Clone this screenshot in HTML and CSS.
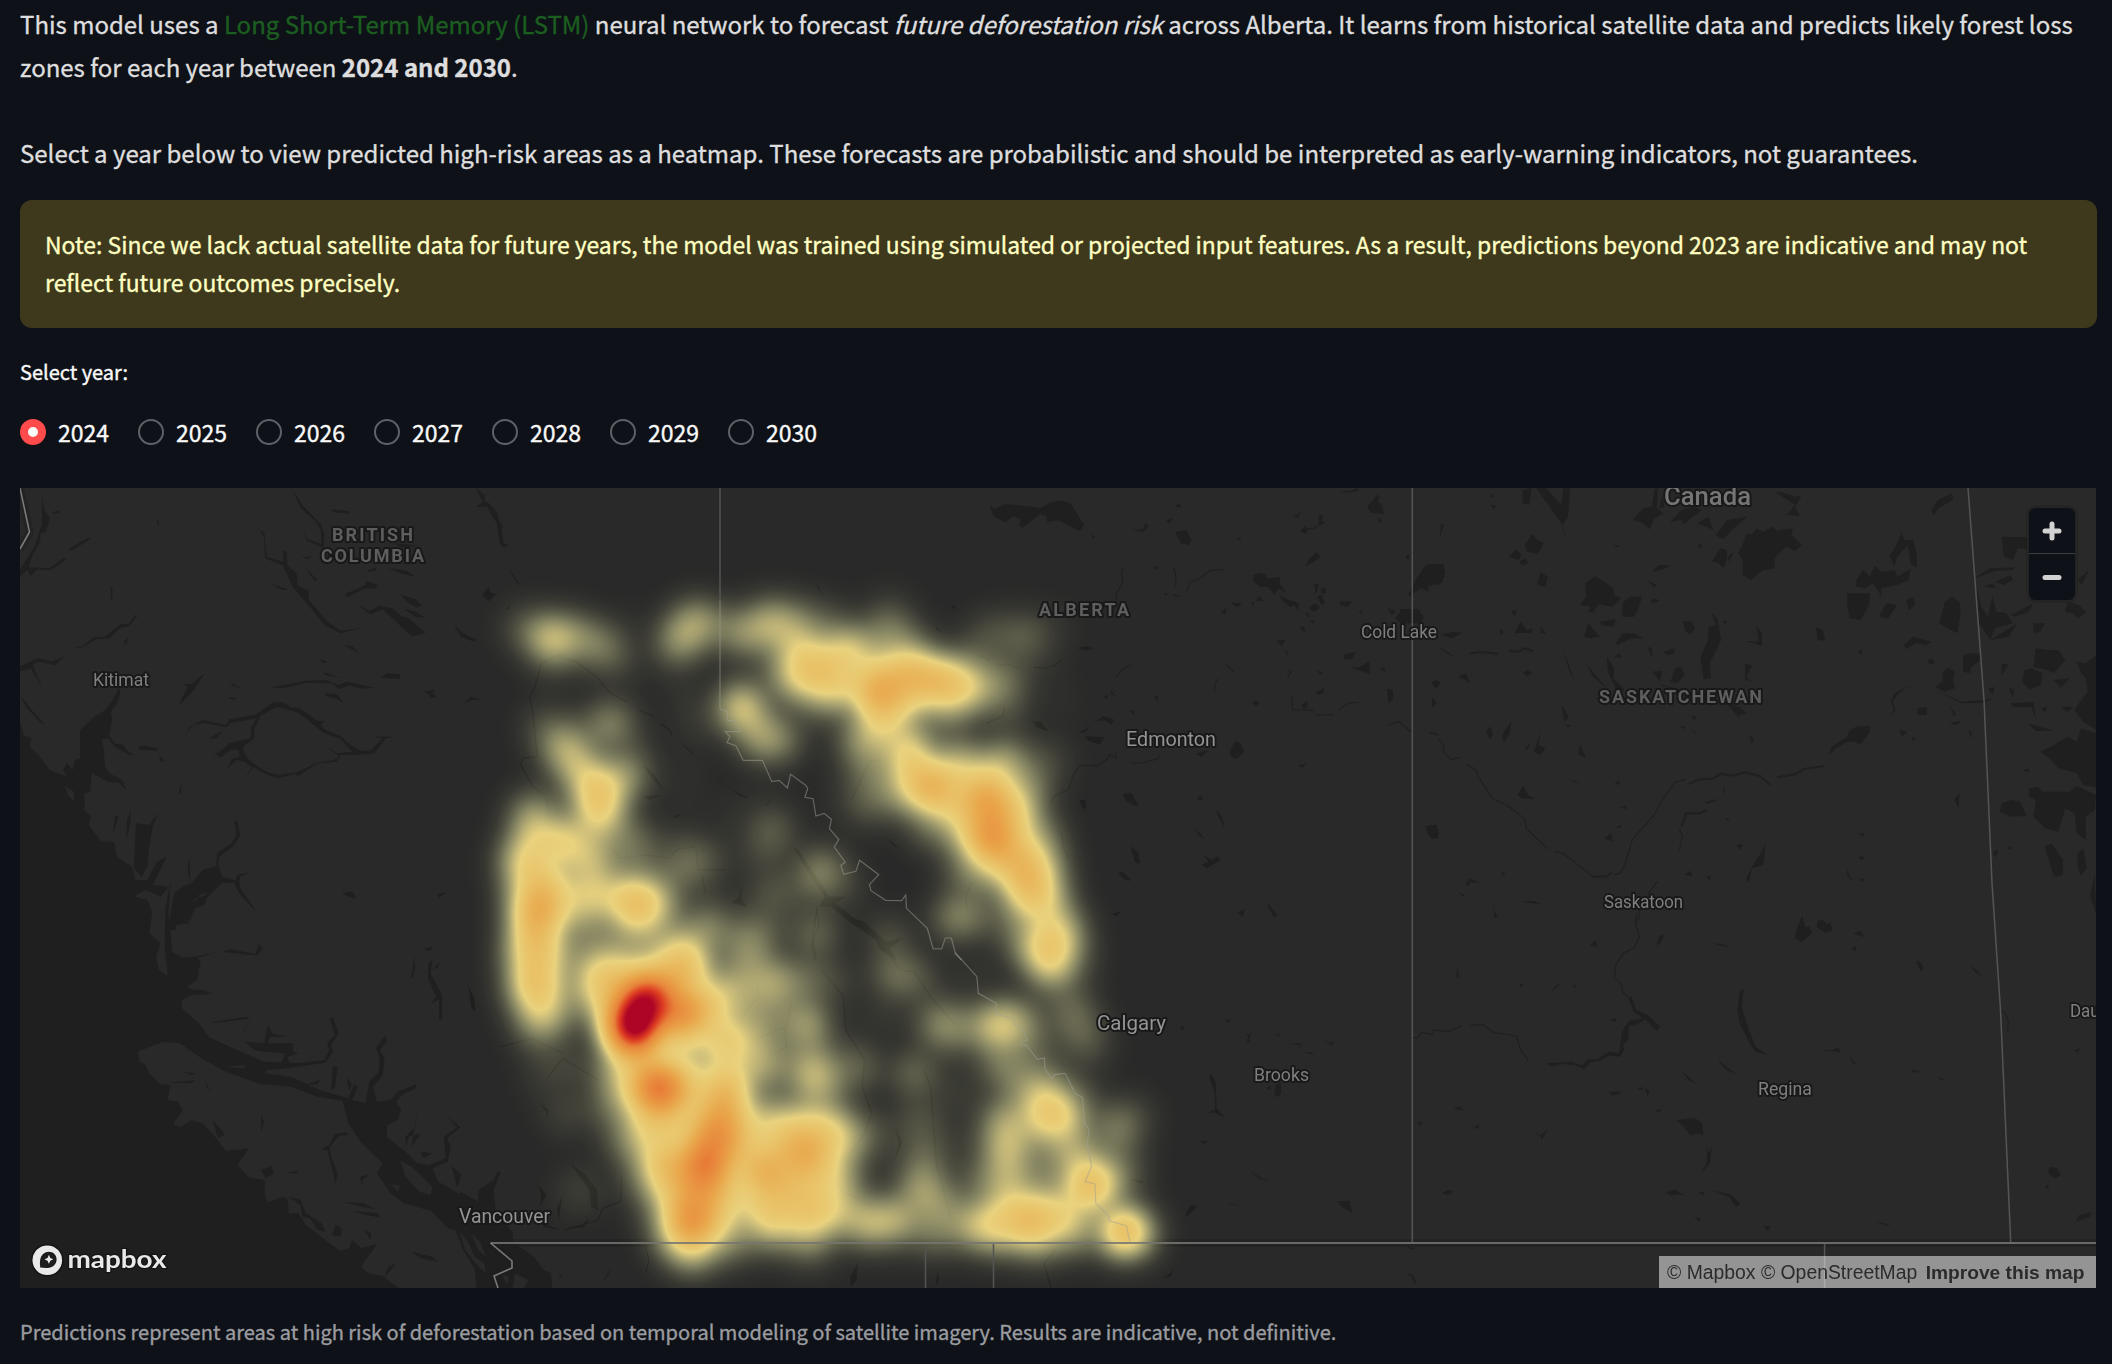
FILE: index.html
```html
<!DOCTYPE html>
<html lang="en">
<head>
<meta charset="utf-8">
<title>Deforestation risk forecast</title>
<link rel="stylesheet" href="styles.css">
</head>
<body>
<main class="page">
  <p class="intro">This model uses a <span class="term">Long Short-Term Memory (LSTM)</span> neural network to forecast <em>future deforestation risk</em> across Alberta. It learns from historical satellite data and predicts likely forest loss<br>zones for each year between <strong>2024 and 2030</strong>.</p>
  <p class="intro intro-second">Select a year below to view predicted high-risk areas as a heatmap. These forecasts are probabilistic and should be interpreted as early-warning indicators, not guarantees.</p>
  <div class="note">Note: Since we lack actual satellite data for future years, the model was trained using simulated or projected input features. As a result, predictions beyond 2023 are indicative and may not<br>reflect future outcomes precisely.</div>
  <div class="label">Select year:</div>
  <div class="years">
    <label class="year"><span class="dot dot-on"></span>2024</label>
    <label class="year"><span class="dot"></span>2025</label>
    <label class="year"><span class="dot"></span>2026</label>
    <label class="year"><span class="dot"></span>2027</label>
    <label class="year"><span class="dot"></span>2028</label>
    <label class="year"><span class="dot"></span>2029</label>
    <label class="year"><span class="dot"></span>2030</label>
  </div>
  <div class="map">
    <svg class="layer" viewBox="20 488 2076 800">
      <!-- north-west: fjords and interior lakes -->
      <g class="water" transform="translate(0 480) scale(.3827 .3333)">
        <path d="M52 725L62 765 82 775 78 800 100 825 130 870 160 895 180 950 215 985 238 1010 232 1035 265 1085 298 1085 305 1130 345 1160 355 1205 385 1225 345 1255 370 1270 375 1300 395 1320 390 1360 40 1360 40 725z"/>
        <path d="M110 45L116 90 130 115 120 155 105 160 105 185 85 225 75 262 130 265 165 235 174 238 132 271 98 268 80 288 72 270 52 290 52 270 90 200 110 130zM135 97L150 93 160 97 145 101zM178 208L232 172 234 178 188 212zM408 118L415 125 414 140zM285 320L294 325 293 360 290 360 290 328zM196 502L215 500 245 472 275 470 315 432 335 433 355 403 358 410 335 440 315 443 285 475 250 478 212 505zM338 470L328 494 324 485zM52 560L100 534 135 545 168 528 145 556 132 552 100 545 85 555 110 620 80 565 52 574zM52 645L90 700 118 734 105 727 70 685z"/>
        <path d="M310 622L315 640 305 672 290 695 293 720 285 765 300 790 322 795 335 815 348 822 340 826 300 800 282 775 265 778 270 800 275 860 285 880 320 900 330 930 310 908 280 905 240 878 235 935 220 940 222 985 195 985 193 935 150 905 130 870 175 890 165 870 175 848 190 870 195 840 210 835 209 750 245 712 275 690 298 655z"/>
        <path d="M762 24L790 75 838 132 848 165 845 205 800 180 794 150 802 177 840 192 838 150 825 125 785 82zM680 150L691 160 697 230 740 245 740 210 750 215 750 255 775 280 778 315 808 335 806 358 855 425 890 452 943 445 890 460 850 437 765 320 740 257 693 235 690 175zM796 260L830 300 822 303zM705 312L755 328 740 331zM862 88L910 93 916 101 875 97zM902 342L955 315 957 303 988 315 980 326 955 325 906 352zM930 370L965 393 992 377 1028 386 1050 410 1065 412 1112 460 1075 469 1035 425 1000 388 968 403zM1045 343L1085 358 1102 376 1090 383 1065 367zM1054 386L1085 395 1113 413 1085 410zM1015 264L1065 273 1085 290 1050 281zM958 272L985 262 982 272 965 276zM1030 190L1098 197 1050 202zM785 225L800 232 817 226 803 238zM898 495L920 498 938 520z"/>
        <path d="M1243 24L1265 45 1268 65 1278 70 1300 98 1303 120 1314 140 1310 150 1316 190 1329 195 1318 203 1306 190 1298 130 1272 80 1243 80 1262 66zM1330 265L1362 320 1345 300zM1275 322L1283 338 1296 342 1278 364 1260 345zM1186 435L1210 460 1235 475 1246 478 1238 485 1205 470zM1332 372L1328 390 1322 388z"/>
        <path d="M535 580L500 640 466 677 490 620 478 612 500 612zM600 606L630 625 610 618zM595 651L620 653 607 660zM705 623L800 602 850 600 885 615 905 605 980 623 940 626 912 615 888 628 865 610 800 608 740 625zM845 576L892 595 850 585zM996 593L1012 580 1045 583 1046 597zM835 537L856 545 845 551zM848 640L880 643 898 670 878 655 855 650zM1108 636L1137 628 1130 640 1140 650 1125 655 1120 643zM1213 672L1230 650 1257 658 1230 660zM1243 740L1258 765z"/>
        <path d="M488 758L495 740 530 720 590 735 600 718 670 703 715 667 740 667 762 683 782 683 830 724 848 722 838 735 850 750 890 768 915 795 945 812 968 812 1000 775 975 770 1030 770 1008 775 978 820 930 825 890 825 880 845 830 850 780 888 770 882 725 895 695 883 660 860 630 910 660 865 640 845 618 840 595 865 605 838 625 830 625 810 605 808 575 833 570 825 557 824 570 818 600 790 655 775 657 740 670 715 605 728 590 742 530 728 505 735zM545 775L583 752 565 775zM680 708L665 745 664 775 635 800 640 825 660 850 700 877 725 885 775 877 825 850 880 838 886 827 850 798 882 820 920 815 890 777 845 758 780 698 725 680z" fill-rule="evenodd"/>
        <path d="M362 800L380 797 410 805 412 812 365 810zM415 825L430 842 420 845zM475 908L472 940 465 945zM415 997L400 1035 390 1100 385 1160 370 1190 350 1165 355 1030 390 1035zM310 1005L295 1065 300 1010zM340 992L342 1020 330 1080 332 1020zM612 1020L620 1025 628 1065 612 1095 573 1130 570 1155 580 1190 615 1200 620 1185 655 1175 628 1190 625 1205 632 1240 671 1298 625 1240 612 1205 580 1203 560 1230 520 1245 500 1270 490 1320 460 1335 460 1350 438 1350 455 1240 480 1218 500 1210 530 1170 565 1158 568 1120 605 1090 618 1065zM435 1130L410 1145 385 1200 360 1210 380 1230 420 1250 440 1220 400 1215zM495 1130L497 1205 490 1170zM505 1245L535 1255 530 1275 505 1285 525 1265zM893 1240L920 1235 932 1256 915 1252zM1142 1245L1165 1237 1148 1252zM932 1184L954 1203z"/>
      </g>
      <!-- south-west: coast, straits and Vancouver Island -->
      <g transform="translate(0 880) scale(.3827 .3333)">
        <path class="water" d="M45 0L380 0 350 20 350 50 385 60 398 95 390 160 420 190 408 230 415 270 450 298 475 315 520 335 475 360 475 385 520 430 545 470 600 500 640 520 690 545 780 550 848 540 860 510 855 490 875 465 862 415 870 412 885 460 865 495 870 515 850 548 740 566 700 570 690 580 760 590 835 630 910 655 925 615 935 620 920 660 955 670 965 605 990 575 992 530 982 505 1005 467 1012 482 993 510 1005 535 1000 585 975 620 985 665 1020 660 1040 635 1088 612 1086 625 1050 645 1035 665 1048 690 1040 720 1012 735 1010 770 1060 815 1090 850 1120 855 1165 835 1160 770 1195 742 1165 706 1203 742 1168 775 1178 800 1170 845 1130 865 1145 905 1200 942 1205 935 1250 965 1250 930 1290 900 1300 875 1308 877 1290 930 1295 990 1340 1060 1340 1085 1395 1130 1420 1170 1440 1180 1443 1225 45 1225z"/>
        <path class="land" d="M360 515L425 485 470 490 520 530 590 575 680 612 760 620 830 650 895 662 910 730 945 790 1000 850 985 880 1020 940 1055 970 1125 992 1170 1045 1190 1050 1210 1110 1240 1165 1245 1225 1042 1225 1000 1188 960 1180 943 1160 985 1092 945 1105 920 1080 912 1105 888 1112 850 1080 800 1035 780 1000 755 1000 752 960 740 950 700 967 692 945 692 900 650 892 620 855 650 805 590 813 565 775 530 730 500 720 470 742 453 732 478 690 465 665 438 660 445 615 420 613 390 580 380 555 365 545zM1045 840L1075 860 1130 920 1125 945 1095 935 1060 890zM1020 912L1045 918 1040 935zM585 560L640 555 640 565zM1140 870L1160 872 1185 930 1150 900z"/>
        <path class="water" d="M475 575L512 580 500 586zM535 600L550 632 540 620zM440 608L510 600 500 610zM610 602L630 668 622 645zM682 707L690 725 682 755zM905 757L910 765 885 768 862 800 865 830 882 880 877 912 865 850 855 810 840 808 860 795 875 762zM940 890L965 884 948 900 945 915zM895 965L950 970 980 988 945 980zM920 993L990 1000 990 1012 955 1005zM1075 1115L1130 1130 1145 1145 1100 1135zM1037 1148L1005 1190 1015 1160zM950 1047L970 1060 968 1080zM752 878L778 872 775 882zM682 870L710 858 715 880 695 895zM730 948L738 975M752 948L785 975 790 1010 810 1015 830 1050 850 1055 840 1030 800 1000 785 960zM876 1035L893 1045 890 1070 868 1065zM620 825L650 805 640 820 620 830zM555 720L572 740 588 765 570 775z"/>
        <path class="water" d="M446 0L440 100 450 215 485 240 485 285 520 280 515 300 475 330 530 330 555 342 500 345 455 300 455 235 512 230 570 215 515 235 525 245 515 285 485 310 440 300 430 200 432 90zM456 110L490 125 500 70 530 50 570 5 600 0 625 20 672 97 628 42 610 8 580 8 540 55 535 75 510 85 492 130 456 135zM580 215L600 208 668 222 676 192 686 205 672 227 600 218zM552 427L640 410 655 415 560 430zM630 462L650 430 640 450zM640 485L690 490 700 435 712 462 760 470 705 470 700 490 765 490 765 515 780 520 750 530 760 555 735 550 745 520 690 515 665 510zM870 560L882 560 875 625 865 630zM800 615L838 598 830 612zM905 592L920 615 912 630zM1083 228L1085 260 1078 297 1075 290zM1130 238L1125 280 1155 345 1155 420 1147 418 1148 355 1125 375 1140 350 1118 295 1120 250zM1150 245L1145 262 1130 270zM1108 207L1132 198 1122 214zM1224 318L1238 350 1242 392 1232 385zM895 40L920 35 932 56zM1142 45L1165 37 1148 52zM1090 690L1085 740 1060 770 1060 805 1068 770 1100 760 1075 800zM1100 815L1130 820 1105 835zM1180 858L1205 885 1195 922zM1328 788L1342 798zM1410 670L1433 690 1430 722 1428 695zM1408 918L1428 945 1410 978 1415 950zM1470 944L1460 1020 1455 985zM1492 852L1530 885 1560 930 1562 990 1545 980 1540 930zM1415 1030L1465 1050 1420 1040zM1480 1045L1520 1035 1540 1015 1525 1043zM1462 1178L1470 1195 1462 1190z"/>
        <path class="land" d="M1200 1050L1225 1090 1240 1130 1265 1150 1270 1180 1250 1160 1215 1110zM1230 1060L1255 1085 1270 1130 1250 1110zM1310 1180L1330 1190 1325 1215zM1345 1180L1380 1200 1370 1225 1340 1225z"/>
      </g>
      <!-- northern and central Alberta -->
      <g class="water" transform="translate(960 488) scale(.33333)">
        <path d="M90 55L105 62 135 48 175 52 240 60 275 42 305 38 330 45 350 75 372 110 360 130 330 115 295 97 262 102 258 85 240 78 187 120 177 112 182 95 160 85 135 103 100 85zM395 138L405 146 398 152zM513 124L548 125 555 108 567 112 550 132zM618 98L638 90 630 108zM642 56L656 47 665 58zM645 133L678 125 695 155 688 171 663 166zM832 155L840 147 843 157zM577 234L597 238 588 245zM612 315L624 317 618 325zM637 317L662 326 645 325zM880 262L895 255 918 260 922 272 962 267 958 285 980 314 955 302 943 320 925 297 900 296 880 280zM887 338L898 324 912 340zM958 322L985 335 1015 345 1015 370 1003 350 990 357 970 340zM1062 288L1077 290 1068 318zM1082 305L1095 298 1098 315 1085 318zM1072 325L1085 320 1095 345 1083 348zM1047 360L1065 345 1080 360 1062 372zM1035 377L1048 375 1045 388zM1050 398L1062 397 1060 408zM1015 418L1030 415 1038 435zM1035 235L1050 210 1070 192 1082 208 1060 222 1050 228zM1222 55L1240 35 1250 20 1260 28 1252 40 1268 55 1272 78 1232 74zM1140 10L1175 8 1190 0 1197 8 1160 14zM1000 88L1022 72 1015 88zM1020 130L1035 115 1045 125 1035 138zM1075 85L1090 80 1085 98 1097 105 1078 112zM1255 88L1266 97 1258 107zM1338 205L1347 198 1346 215zM1138 340L1177 340 1165 356 1142 352zM1282 360L1308 370 1295 382zM1195 372L1208 367 1205 377zM1305 390L1330 363 1375 363 1392 390 1380 405 1320 405zM1345 320L1365 280 1395 233 1440 228 1440 290 1400 285 1408 310 1380 300 1350 325zM810 342L845 348 832 358zM782 370L800 362 795 380zM873 343L883 343 878 355zM950 457L975 456 965 476zM977 483L985 498 980 502zM1150 500L1188 492 1178 512 1155 515zM1172 540L1198 538 1228 520 1230 558 1198 547zM1257 546L1272 538 1278 550zM1280 603L1298 605 1300 630 1287 648zM1070 548L1087 553 1083 560zM1067 615L1092 600 1092 612 1078 622zM1025 650L1042 640 1042 660 1028 662zM877 645L888 635 898 645 888 654zM808 795L825 760 840 765 852 790 830 813 815 808zM708 797L745 785 725 808zM1015 831L1040 828 1025 840zM352 480L380 475 402 482 375 487zM218 700L240 700 267 731 228 718zM355 735L395 714 370 735zM405 700L430 685 463 695 453 710 435 697zM375 745L435 748 418 770 385 757zM430 625L447 620 440 633zM450 605L468 624 455 620zM510 665L525 670 520 680zM583 627L594 622 592 640zM358 938L375 935 378 960 368 963zM487 918L515 915 537 955 520 952 498 938zM712 930L722 922 730 935 718 939zM707 1022L735 1053 715 1042zM512 1075L535 1095 540 1125 525 1122zM475 1148L510 1180 490 1172zM728 1100L755 1115 775 1105 780 1117 740 1140 727 1130 745 1120zM766 965L785 985 795 1020 780 995zM1398 1015L1430 1010 1435 1050 1415 1053zM1418 588L1440 580 1430 600zM1417 630L1430 645 1418 657z"/>
        <path class="stream" d="M490 238L485 255 488 285 470 315 468 335M642 238L648 270 645 295M680 308L690 283 720 270 750 248 790 244M58 502L90 515M112 532L140 528 178 540M220 538L255 540 282 534 303 515M467 570L485 545 515 530M512 825L545 825 595 812 600 800M470 795L468 810 450 800 440 815 415 833 360 832 340 860 325 905 280 927 275 945M290 1025L305 1040 310 1080 327 1113M797 528L824 553M763 612L765 585 776 572M995 625L998 665 1062 667M1068 681L1122 680M1135 667L1165 645 1195 643M1285 712L1315 700 1355 733M1410 735L1433 740M985 545L993 552 982 568M1035 122L1060 122 1075 112"/>
      </g>
      <!-- southern Alberta -->
      <g class="water" transform="translate(1050 860) scale(.33333)">
        <path d="M205 35L218 35 242 58 235 63 212 48zM250 0L270 2 263 12zM457 15L480 5 510 0 470 25zM185 163L213 153 200 168zM562 157L585 147 578 170zM650 125L683 168 672 170 658 148zM525 478L541 480 532 489zM390 508L397 495 405 508zM588 518L598 525 606 517 598 535 600 548 590 548 595 532zM678 525L690 516 685 525 700 533zM712 556L748 548 755 562 742 553zM763 577L780 576 795 585zM822 540L842 550 850 543 848 557 838 553zM478 650L485 643 497 670 500 745 525 773 495 758 472 758 495 750 495 700zM650 685L661 676 662 690zM677 675L692 668 694 700 685 711 673 705zM450 844L473 843 465 852zM597 930L635 955 660 962 630 958zM530 1026L570 1038 545 1033zM405 1065L425 1032 432 1040 443 1033 435 1048 410 1068zM860 1023L898 1023 907 1058 880 1043zM235 957L282 963 275 970zM1103 790L1118 783 1110 797zM1128 800L1155 805zM1065 1160L1095 1165 1090 1169zM1068 1237L1090 1245 1100 1273 1092 1270 1085 1250zM338 1255L360 1240 372 1227 360 1250zM1175 1000L1200 990 1200 1004z"/>
      </g>
      <!-- mountain lakes and rivers beneath the risk surface -->
      <g transform="translate(480 560) scale(.40816 .33333)">
        <path class="water" d="M400 614L425 640 450 690 415 645zM400 710L446 705 415 719zM582 655L620 690 660 715 640 710zM463 776L495 760 485 770zM715 718L700 740 708 722zM640 980L640 1015 655 1040 615 1028 635 1010zM765 855L785 880 830 960 855 1010 898 1010 870 1028 915 1075 940 1085 995 1145 1035 1135 1005 1165 1020 1200 980 1170 970 1140 905 1085 860 1040 830 1040 845 1010 815 960zM998 835L1027 865 1010 855zM820 65L843 107 830 90zM1155 135L1165 140 1162 150zM1115 198L1130 215 1120 212z"/>
        <path class="stream" d="M190 290L235 305 285 350 320 400 360 425M390 450L425 470M440 490L465 510 470 530M498 555L525 585M205 280L150 310 135 380 122 410 130 470 140 590 105 595 100 615 130 680 160 705 172 780M325 865L340 895 405 885 465 895 480 870 525 860M530 870L535 930 600 930M545 950L552 1000M1285 440L1280 470 1240 490M980 600L955 605 935 655 910 720M1205 965L1190 1010 1195 1050M825 1040L830 1100 812 1150 820 1200"/>
      </g>
      <g transform="translate(480 880) scale(.4719 .33333)">
        <path class="water" d="M965 1220L970 1170 973 1200zM785 1220L785 1190 800 1150 798 1200zM880 742L895 790 878 840 888 790z"/>
        <path class="stream" d="M725 270L770 350 775 450 815 540 810 620 830 700 815 760 780 830 780 940 830 980M940 570L955 620 960 720 968 860 1000 1020M850 190L890 270 920 275 955 350 1005 430M715 80L705 170 712 240M145 590L175 535 250 600M45 500L110 475 175 520M300 890L298 965 260 985 250 1020 180 1050M350 1095L358 1140 352 1175M1220 1110L1195 1150 1210 1222M262 1200L275 1172M540 440L590 350 588 305M580 480L650 440 660 365M645 440L650 500 610 530"/>
      </g>
      <!-- Saskatchewan and Manitoba lakes -->
      <g class="water" transform="translate(1400 480) scale(.4541 .3333)">
        <path d="M300 24L322 24 355 75 360 24 375 26 370 110 358 135 367 188 355 130zM270 30L290 24 285 75 270 70zM200 40L207 50 200 55zM200 75L213 76 205 88zM90 130L97 135 88 170zM290 162L303 180 317 190 303 222 280 215 275 195zM255 208L268 225 262 240 240 232zM262 245L275 235 282 248 270 258zM310 277L325 290 320 322 302 312zM62 253L95 252 100 275 93 308 60 319 45 310 40 330 63 335 30 330 22 347 35 300zM0 388L35 386 52 412 40 430 0 430zM430 288L455 310 470 325 472 345 487 355 468 380 437 372 425 397 415 397 418 378 396 375 410 350 408 310zM505 350L533 350 525 385 515 410 490 410 490 370zM545 303L565 315 560 323zM555 275L570 255 598 255 580 268zM550 365L560 355 572 362 560 368zM470 195L485 196 478 202zM12 230L20 225 18 240z"/>
        <path d="M535 85L555 80 560 30 568 24 566 85 580 100 560 115 550 148 535 130 513 120zM570 85L578 50 582 80zM595 125L620 90 645 80 665 90 625 132 620 120zM655 130L680 110 690 150zM695 165L720 120 765 110 735 145 712 178zM745 220L765 160 775 165 785 145 800 155 820 140 830 152 865 145 862 165 885 195 870 213 850 200 835 220 825 235 825 265 800 270 772 300 755 285 755 240zM705 205L720 210 720 240 712 264 700 248 687 245zM735 215L725 248 722 230zM655 190L668 198 660 205zM825 35L845 38 870 50 885 45 870 80 880 108 852 105 870 75zM1170 90L1185 60 1215 40 1218 60 1185 85 1175 107z"/>
        <path d="M685 395L700 420 707 480 695 515 682 550 685 595 668 598 662 530 678 480 680 440 695 435zM622 425L640 423 650 445 640 463 630 455zM710 420L720 425 715 432zM785 438L797 460 797 497 762 483 790 485zM760 550L775 558 762 590 775 603 760 600zM600 590L605 565 620 562 627 585 610 610 595 605zM555 575L577 572 573 605zM360 515L370 545 383 600 372 570zM410 550L440 600 455 625 425 590zM455 530L472 565 470 595 495 630 480 640 458 575zM405 470L415 430 440 470 420 475zM440 425L475 418 470 440 445 435zM475 490L490 460 515 460 535 475 510 475 480 495zM265 425L280 450 293 445 290 458 252 460zM245 392L257 390 253 410zM220 445L228 455 222 467zM90 465L115 455 138 458 115 475zM310 440L322 460 310 460zM470 532L482 520 490 532zM545 500L555 505 555 535zM580 515L605 505 605 520 588 525zM270 580L280 570 292 578 280 588zM128 590L145 580 155 610 140 598zM70 605L82 600 90 612 75 622zM72 655L80 670 70 682z"/>
        <path d="M1005 300L1020 270 1035 290 1045 258 1060 275 1090 270 1095 290 1125 265 1120 300 1095 315 1060 325 1060 350 1050 325 1040 310 1025 325 1005 320zM985 340L1035 340 1033 375 1015 420 990 415 985 375zM1085 215L1100 175 1105 155 1110 180 1130 180 1138 225 1138 262 1125 255 1118 195 1095 230 1088 262 1078 225zM1055 410L1070 370 1095 375 1075 415zM1115 360L1130 350 1135 375 1120 390zM1200 365L1215 350 1232 365 1235 390 1228 460 1200 440 1187 430zM1110 495L1130 470 1170 485 1160 495 1135 490 1115 508zM915 440L930 450 937 482 920 480zM1007 515L1015 508 1020 525zM1162 545L1170 533 1178 548 1170 555zM1195 575L1208 563 1222 575 1218 600 1222 625 1200 635 1178 620 1195 605zM1240 525L1258 520 1278 522 1275 545 1258 560 1255 580 1240 575zM1170 625L1190 635 1235 665 1285 660 1310 655 1285 668 1235 670 1195 640zM1080 705L1088 685 1080 665 1090 640 1120 618 1133 618 1115 622 1095 645 1085 665 1092 690zM1140 685L1160 680 1160 705 1140 705zM1210 675L1225 705 1220 708zM1210 728L1238 722 1225 735zM1100 750L1118 755 1105 770zM1125 770L1138 775 1130 783zM1253 750L1260 760 1255 775z"/>
        <path d="M1258 300L1300 265 1355 262 1350 270 1310 272 1275 290zM1285 320L1305 310 1312 325zM1310 305L1345 285 1350 300 1330 315zM1325 170L1380 172 1380 208 1360 205 1350 240 1330 230zM1270 320L1280 380 1295 410 1305 345 1312 395 1335 400 1350 430 1310 445 1300 480 1335 450 1360 430 1340 470 1300 480 1275 430zM1345 405L1395 370 1385 395 1355 410zM1465 395L1470 365 1495 375 1510 395 1495 415 1480 400zM1395 430L1420 430 1410 455 1395 460zM1400 505L1425 510 1450 510 1465 540 1440 580 1425 570 1395 560zM1375 570L1390 565 1415 580 1412 615 1385 628 1370 605zM1440 600L1475 595 1455 625zM1325 550L1340 555 1325 585zM1490 545L1510 550 1533 525 1533 750 1505 725 1485 690 1500 660 1515 635 1510 595 1500 580zM1410 815L1440 795 1470 770 1490 785 1500 745 1533 760 1533 922 1505 915 1490 880 1450 865 1430 835zM1385 925L1405 920 1415 935 1475 935 1490 918 1533 945 1530 990 1510 1010 1510 1080 1490 1060 1485 1000 1465 985 1450 1055 1420 1045 1395 1010 1400 960 1385 950zM1325 970L1345 960 1365 965 1380 1008 1345 1010 1320 995zM1420 1100L1435 1090 1460 1140 1460 1185 1440 1190zM1492 1120L1505 1105 1512 1165 1500 1188 1492 1160zM1530 1180L1533 1300 1520 1250zM1383 730L1395 735 1440 752 1400 753zM1345 670L1395 665 1400 720 1390 680 1350 682zM1455 680L1483 680 1470 695zM1412 685L1425 680 1420 697zM1295 625L1310 622 1305 645zM1340 622L1352 630 1350 655zM1492 300L1518 270 1500 315zM1370 870L1385 865 1385 878zM1220 960L1232 940 1230 983zM1305 1115L1318 1110 1312 1133zM1337 1105L1345 1098 1348 1110z"/>
        <path d="M720 670L745 680 765 700 745 705 750 720zM640 708L653 710 648 720zM617 740L628 738 625 748zM640 745L658 770 645 755zM768 762L780 780 775 792zM945 825L950 800 985 770 990 750 1005 740 1034 737 1035 755 1015 792 1000 785 985 785 960 805zM190 755L200 738 205 765 198 777zM245 723L242 760 228 790 225 765zM300 795L310 757 305 795 320 805 310 825 295 815zM275 805L290 787 280 810zM355 675L372 710 362 725zM365 735L377 735 370 745zM397 793L405 820 410 835 392 822zM375 898L395 908 385 908zM258 945L272 918 282 945 298 958 268 955zM472 908L485 902 482 916zM485 982L500 978 498 988zM57 1038L80 1035 86 1060 75 1078 60 1060zM450 1075L465 1060 468 1085zM475 1040L487 1035 485 1045zM740 1095L755 1092 750 1110zM805 1092L800 1155 775 1165 768 1210 762 1195 780 1150 792 1125zM717 1013L727 1018 720 1022zM1010 1062L1020 1058 1022 1070zM1010 1130L1024 1130 1016 1142zM985 1165L990 1190 1000 1205 985 1190zM1012 1195L1024 1198 1015 1205zM625 1185L640 1172 645 1188zM672 1187L685 1190 682 1202zM145 1210L155 1195 175 1208 155 1207 148 1220zM222 1177L233 1180 227 1187zM128 1238L140 1243 143 1252zM268 1265L295 1263 310 1273zM205 1260L208 1295 215 1310 208 1315zM695 1088L710 1066zM160 1165L172 1178z"/>
        <path class="stream thick" d="M635 912L660 898 690 895 705 882 735 887 758 877 793 888 815 915M830 892L870 883 890 867 935 858M620 1040L630 1000 660 1000 675 990M672 970L695 960M155 520L180 516 215 521M240 512L260 516 275 505 293 514M425 1190L455 1190 465 1178"/>
        <path class="stream" d="M65 758L85 765M85 778L97 795 95 815 112 838 135 832M145 853L168 870 172 890 205 957 235 975 275 1017 278 1045 325 1107M338 1114L357 1118 425 1190M473 1183L485 1180 495 1155 512 1078 560 1005 580 955 605 908 630 897M615 1048L622 1068 615 1112M715 923L713 940M545 1245L550 1235 567 1205M528 1285L527 1310 518 1330M90 505L118 530M575 615L620 632"/>
      </g>
      <g class="water" transform="translate(1400 900) scale(.4541 .3333)">
        <path d="M885 48L893 80 902 80 907 100 885 127 870 115 872 92zM920 62L930 58 940 72 948 68 953 90 937 98 917 80zM998 100L1015 93 1023 112zM995 145L1006 138 1002 155zM418 135L432 120 433 140zM583 103L575 125 565 138 570 110zM687 130L710 133 730 145zM125 195L130 235 125 230zM261 255L272 252 268 262zM357 246L335 275 340 260zM380 262L385 252 387 263zM1137 185L1145 182 1153 205 1148 215zM1258 195L1283 230 1265 215zM748 275L757 265 753 320 762 365 783 440 810 465 783 455 770 430 748 370 743 330zM922 452L950 450 965 443 972 458 955 453zM988 465L1003 492 998 493zM1125 508L1145 515 1130 518zM1183 532L1200 538 1190 540zM698 477L740 523 718 510zM620 512L650 550 635 540zM460 575L487 575 480 585 465 585zM522 565L535 562 535 572zM538 562L550 575 545 588zM560 628L575 630 570 638zM118 628L130 618 140 630zM163 682L175 673 172 688zM297 700L308 708 325 688 312 720 310 705zM609 660L650 654 665 670 668 705 652 700 640 707 625 680zM677 740L680 760 687 740 682 790 662 822 675 790zM92 880L108 870 119 875 105 885zM585 880L605 868 628 887 610 883 598 887zM655 875L670 877 668 887zM687 870L730 885 750 912 740 920 725 892zM647 950L663 957 660 966zM788 960L800 978 817 978 810 993zM1048 967L1070 970 1080 980zM1430 800L1448 805 1456 825 1442 835 1428 820zM1424 853L1430 860 1422 868zM1488 965L1495 945 1523 937 1520 950zM1485 450L1498 445 1493 458zM461 360L475 355 475 365z"/>
        <path d="M510 290L520 330 545 345 573 380 565 392 540 358 520 375 505 378 502 420 490 435 495 445 485 470 460 467 440 483 420 485 405 507 385 495 355 492 335 500 322 490 345 488 380 485 400 497 415 478 435 478 460 455 483 460 488 400 495 380 505 362 535 355 515 335 503 295z"/>
        <path class="stream" d="M522 40L517 65 527 110 515 145 492 160 475 195 472 235 487 250 490 275 503 292M28 415L40 412 47 398 70 403 75 390 107 395 137 377M155 376L183 374 207 398 235 402 257 410 265 450 283 482M1322 330L1333 340 1340 365 1338 395"/>
      </g>
      <path class="halo" d="M490 1243H2096M20 488L29.500 532 20 549M490.600 1243L512 1261V1268L494 1276 498 1288"/>
    </svg>
    <canvas class="layer" id="risk" width="2076" height="800"></canvas>
    <svg class="layer" viewBox="20 488 2076 800">
      <path class="province" d="M1412.300 488V1242M1968 488L1977 607 1984 700 1992 883 2000.500 1010 2010.700 1242M925.500 1244V1288M993.500 1244V1288M1824.600 1244V1288"/>
      <path class="province" d="M720 488V600"/>
      <path class="province faint" d="M720 600V709"/>
      <g transform="translate(480 560) scale(.40816 .33333)"><path class="province faint" d="M588 447L606 456 606 481 624 482 637 514 601 515 612 530 605 548 627 557 645 601 692 601 715 665 733 661 753 684 761 643 797 675 803 685 796 712 816 716 823 768 843 760 861 778 856 806 879 839 868 861 895 907 884 916 891 943 921 934 930 901 977 944 954 974 958 992 994 1021 1033 1022 1043 1005 1045 1045 1096 1105 1110 1166 1131 1167 1140 1134 1155 1134 1165 1182 1180 1200"/></g>
      <g transform="translate(480 880) scale(.4719 .33333)"><path class="province faint" d="M1007 218L1053 290 1056 340 1094 370 1094 402 1130 417 1132 432 1150 450 1160 480 1147 485 1147 495 1158 496 1181 538 1196 534 1197 567 1212 596 1217 584 1240 580 1261 640 1277 653 1281 730 1291 750 1287 790 1296 860 1282 905 1303 912 1305 970 1333 1010 1333 1022 1370 1038 1377 1085"/></g>
      <path class="nation" d="M490.600 1243H2096"/>
      <path class="nation thin" d="M490.600 1243L512 1261V1268L494 1276 498 1288M20 488L29.500 532 20 549"/>
      <g class="place region">
        <text x="332" y="541" textLength="81">BRITISH</text>
        <text x="321" y="562" textLength="103">COLUMBIA</text>
        <text x="1039" y="616" textLength="90">ALBERTA</text>
        <text x="1599" y="703" textLength="163">SASKATCHEWAN</text>
      </g>
      <text class="place country" x="1664" y="504.500" textLength="87" lengthAdjust="spacingAndGlyphs">Canada</text>
      <g class="place city">
        <text x="1126" y="746" textLength="90" lengthAdjust="spacingAndGlyphs">Edmonton</text>
        <text x="1097" y="1030" textLength="69" lengthAdjust="spacingAndGlyphs">Calgary</text>
        <text x="459" y="1222.500" textLength="91" lengthAdjust="spacingAndGlyphs">Vancouver</text>
      </g>
      <g class="place town">
        <text x="93" y="686" textLength="56" lengthAdjust="spacingAndGlyphs">Kitimat</text>
        <text x="1361" y="638" textLength="76" lengthAdjust="spacingAndGlyphs">Cold Lake</text>
        <text x="1604" y="908" textLength="79" lengthAdjust="spacingAndGlyphs">Saskatoon</text>
        <text x="1254" y="1081" textLength="55" lengthAdjust="spacingAndGlyphs">Brooks</text>
        <text x="1758" y="1094.500" textLength="54" lengthAdjust="spacingAndGlyphs">Regina</text>
        <text x="2070" y="1017" textLength="62" lengthAdjust="spacingAndGlyphs">Dauphin</text>
      </g>
    </svg>
    <div class="zoom">
      <button class="zoom-btn" aria-label="Zoom in"><svg viewBox="0 0 46 46"><path d="M23 16V30M16 23H30"/></svg></button>
      <button class="zoom-btn" aria-label="Zoom out"><svg viewBox="0 0 46 46"><path d="M16 23.500H30"/></svg></button>
    </div>
    <svg class="logo" viewBox="30 1240 150 40">
      <circle class="logo-rim" cx="47.300" cy="1260.300" r="16.500"/>
      <circle class="logo-disc" cx="47.300" cy="1260.300" r="14.800"/>
      <path class="logo-drop" d="M40.200 1267.600C39.500 1262 40 1257.500 42.400 1254.800C45.600 1251 51.500 1251 54.600 1254.200C57.600 1257.500 57.200 1262.500 54 1265.500C50.500 1268.600 45.500 1268.300 40.200 1267.600Z"/>
      <path class="logo-disc" d="M48.900 1254.800L50.300 1257.900 53.400 1259.300 50.300 1260.700 48.900 1263.800 47.500 1260.700 44.400 1259.300 47.500 1257.900Z"/>
      <text class="logo-text" x="67.500" y="1268" textLength="99" lengthAdjust="spacingAndGlyphs">mapbox</text>
    </svg>
    <div class="credit"><span>© Mapbox</span> <span>© OpenStreetMap</span> <b>Improve this map</b></div>
  </div>
  <p class="caption">Predictions represent areas at high risk of deforestation based on temporal modeling of satellite imagery. Results are indicative, not definitive.</p>
</main>
<script src="heatmap.js"></script>
</body>
</html>
```
FILE: styles.css
```css
body {
  margin: 0;
  background: #0e1117;
  color: #fafafa;
  font-family: "Noto Sans CJK SC", "Noto Sans", sans-serif;
}
.page {
  box-sizing: border-box;
  width: 2112px;
  height: 1364px;
  padding: 2px 15.500px 0 20px;
  overflow: hidden;
  -webkit-text-stroke: .35px;
}
.intro {
  margin: 0;
  font-size: 24px;
  line-height: 43.200px;
  color: #dededf;
  white-space: nowrap;
}
.intro-second { margin-top: 42.200px; }
.term { color: #1b5e20; }
.note {
  box-sizing: border-box;
  height: 128px;
  margin-top: 26.200px;
  padding: 25px;
  border-radius: 12px;
  background: #3e391d;
  color: #ffffc2;
  font-size: 22.910px;
  line-height: 38px;
  white-space: nowrap;
}
.label {
  margin-top: 27px;
  font-size: 20px;
  line-height: 34px;
}
.years {
  display: flex;
  height: 38px;
  margin-top: 24px;
  align-items: center;
}
.year {
  display: flex;
  align-items: center;
  gap: 12px;
  width: 118px;
  font-size: 23px;
  line-height: 38px;
}
.dot {
  box-sizing: border-box;
  width: 26px;
  height: 26px;
  border: 2px solid #5f6168;
  border-radius: 50%;
}
.dot-on {
  border: 8px solid #ff4b4b;
  background: #fafafa;
}
.map {
  position: relative;
  width: 2076px;
  height: 800px;
  margin-top: 37px;
  overflow: hidden;
  background: #292929;
  -webkit-text-stroke: 0;
}
.layer {
  position: absolute;
  inset: 0;
  width: 2076px;
  height: 800px;
}
.water { fill: #1f1f1f; }
.land { fill: #292929; }
.stream {
  fill: none;
  stroke: #202020;
  stroke-width: 1.200px;
  vector-effect: non-scaling-stroke;
}
.thick { stroke-width: 2.200px; }
.halo { fill: none; stroke: #1d1d1d; stroke-opacity: .45; stroke-width: 8px; }
.province {
  fill: none;
  stroke: #555;
  stroke-width: 1.500px;
  vector-effect: non-scaling-stroke;
}
.faint { stroke: #a0a096; stroke-opacity: .5; stroke-width: 1.200px; }
.nation { fill: none; stroke: #767672; stroke-opacity: .85; stroke-width: 2.200px; }
.thin { stroke: #8a8a8a; stroke-width: 1.600px; }
.place {
  font-family: Roboto, "Open Sans", sans-serif;
  paint-order: stroke;
  -webkit-text-stroke: 0;
  stroke: #191919;
  stroke-width: 4px;
  stroke-linejoin: round;
}
.region { font-size: 18px; font-weight: 700; fill: #5e5e5e; }
.country { font-size: 25px; font-weight: 500; fill: #757575; }
.city { font-size: 20px; fill: #949494; }
.town { font-size: 18.300px; fill: #7f7f7f; }
.zoom {
  position: absolute;
  top: 20px;
  right: 21px;
  width: 46px;
  height: 92px;
  border-radius: 6px;
  overflow: hidden;
  box-shadow: 0 0 0 3px rgba(0, 0, 0, .1);
  background: #0e1117;
}
.zoom-btn {
  display: block;
  width: 46px;
  height: 46px;
  padding: 0;
  border: 0;
  background: none;
}
.zoom-btn + .zoom-btn { box-shadow: 0 -1px 0 #3c3e43; }
.zoom-btn svg {
  display: block;
  fill: none;
  stroke: #d2d2d2;
  stroke-width: 5px;
  stroke-linecap: round;
}
.logo {
  position: absolute;
  left: 10px;
  top: 752px;
  width: 150px;
  height: 40px;
}
.logo-rim { fill: #151515; }
.logo-disc { fill: #e9e9e9; }
.logo-drop { fill: #1c1c1c; }
.logo-text {
  font: 700 25px Lato, sans-serif;
  fill: #e9e9e9;
  stroke: #151515;
  stroke-width: 2.500px;
  paint-order: stroke;
}
.credit {
  position: absolute;
  right: 0;
  bottom: 0;
  box-sizing: border-box;
  width: 437px;
  height: 32px;
  padding-left: 8px;
  background: rgba(255, 255, 255, .5);
  color: #2b2b2b;
  font: 19.360px/33px "Liberation Sans", Arial, sans-serif;
  white-space: nowrap;
}
.credit b { margin-left: 3px; font-size: 19.200px; }
.caption {
  margin: 27px 0 0;
  font-size: 20.040px;
  line-height: 34px;
  color: #9b9ca0;
  white-space: nowrap;
}
```
FILE: heatmap.js
```js
// Forecast samples: x, y, risk. Each sheet has its own origin and scale on the page.
const sheets = [
  { ox: 480, oy: 560, sx: 0.40816, sy: 1 / 3, samples: `
175 235 .82;110 205 .35;175 160 .3;240 230 .6;300 260 .42;340 310 .2;180 310 .35;75 240 .08;370 200 .08;60 150 .03;400 280 .08
530 185 .65;490 235 .62;470 280 .35;540 130 .3;440 220 .2;570 250 .3;600 200 .45;400 200 .03
715 190 .78;650 220 .6;700 130 .35;780 180 .6;650 290 .25;730 270 .65
830 320 1.45;780 260 1.05;900 270 1.05;780 360 1.1;870 385 1.15;910 320 1.15;740 330 .75;820 430 .6;850 190 .42;900 210 .5;1000 200 .45;960 250 .7;1040 240 .6;1000 130 .15
975 395 1.95;1060 350 1.75;1130 360 1.6;1190 385 1.15;1240 380 .7;1290 360 .4;1000 320 1.4;1060 290 1.1;940 340 1.3;940 450 1.0;980 480 1.25;1040 430 1.35;1100 415 1.2;980 520 .98;930 540 .65;1150 450 .75;1090 480 .5;1200 300 .55;1180 500 .25;1290 450 .25;1330 230 .27;1250 220 .22;1380 300 .1;1400 200 .1;1420 420 .03
640 445 .85;640 390 .5;690 530 .65;670 480 .75;740 540 .45;600 430 .4;590 500 .25;540 480 .12;700 590 .2;820 520 .08;800 580 .07;720 440 .3
1000 560 .82;1050 560 1.03;950 620 .5;960 700 .4;940 740 .25
1060 620 1.3;1105 680 1.75;1180 650 1.25;1170 600 .85;1250 640 1.2;1290 600 .7;1240 720 2.15;1255 830 2.4;1200 800 1.6;1160 740 1.35;1310 760 1.5;1290 700 1.4;1100 745 1.05;1030 700 .85;1020 620 .95;1100 800 .5;1180 840 1;1320 900 1.75;1260 920 1.3;1340 980 1.6;1380 920 1.2;1390 1000 1.15;1340 1040 1.1;1370 830 .8;1340 680 .7;1230 920 1;1190 940 .5;1300 1030 .75;1400 1060 1;1390 1150 1.3;1430 1120 1;1350 1140 .9;1300 1100 .45;1450 1000 .3;1430 880 .3;1490 1100 .12;1390 600 .2;1150 540 .3;1230 530 .22;1165 1070 .42;1120 1070 .2;1220 1060 .35
205 560 .72;160 500 .3;240 620 .9;270 660 1.15;285 700 1.35;320 680 1.1;280 640 1.02;290 770 1.1;330 740 .8;320 490 .42;260 500 .35;360 640 .6;380 560 .22;200 640 .5;190 700 .3;250 720 .85;160 650 .12;130 580 .1
130 760 .65;130 830 1.02;200 840 1.08;235 860 1;100 900 1.05;130 930 1.3;140 1060 1.95;200 1000 1.1;160 990 1.65;200 930 .95;230 940 .88;100 1000 1.2;95 1100 1.15;130 1150 1.55;180 1130 1.1;220 1050 1;270 1000 1;280 900 .85;270 820 .8;65 900 .35;55 1000 .3;60 800 .2;190 760 .5;25 950 .03
380 1030 1.45;330 1010 1.1;380 970 .95;435 1030 1;380 1095 .98;480 1040 .4;460 940 .4;310 930 .7;270 1110 .55;340 800 .6;380 860 .4;440 1130 .75
520 910 .35;580 880 .15;480 850 .2;715 810 .25;690 880 .18;835 930 .42;800 980 .3;890 980 .2;780 900 .18;660 1000 .12;720 1000 .22;600 1020 .1;560 1000 .15;560 1100 .5;650 1110 .4;820 1120 .28;620 760 .05;700 720 .07;1000 960 0;1000 800 .1;880 700 .1;500 620 .03;500 400 .06;500 700 .03;900 1080 .03;1000 1130 .18` },
  { ox: 480, oy: 880, sx: 0.4719, sy: 1 / 3, samples: `
120 170 1.4;115 300 1.45;85 230 1.1;155 220 1.1;150 330 1.1;90 340 1;125 395 1;125 440 .65;120 490 .3;55 300 .35;170 400 .65;170 470 .3;190 250 .65;190 330 .6;235 160 .5;290 190 .65;340 180 .65;30 250 .03
240 260 1;235 340 1.05;300 260 1.25;360 240 1.15;430 205 1.15;440 260 1.5;460 300 1.3;400 290 2.1;330 300 2.1;270 300 1.5;280 360 2.2;332 420 5.4;335 390 5.2;350 350 4.6;322 460 4.5;390 370 3.6;290 420 3.4;430 400 2.6;480 380 1.6;510 380 1.05;370 460 2.6;330 510 2.4;420 460 1.7;260 440 1.3;260 480 1.02;300 520 1.5;290 560 1.05;350 540 1.9;400 520 1.2;470 540 .82;440 510 1;520 480 1.2;530 540 1.1;490 600 1.1
375 620 3.1;330 600 1.8;380 680 2.2;430 630 1.9;320 680 1.15;300 620 1.05;380 570 2;360 740 1.3;420 730 1.35;440 560 1.15
520 620 1.6;510 700 2.2;490 770 2.7;475 850 3.1;440 840 2.3;450 930 2.4;480 920 2.5;450 1010 2.5;445 1050 2.1;400 850 1.7;400 930 1.5;360 830 1.1;375 930 1.02;390 1020 1.05;410 1080 1.15;450 1115 1.05;500 1080 1;510 1010 1.4;520 900 1.8;540 780 2;550 840 1.6;550 700 1.4;575 700 1.05;550 620 1.05;530 960 1.3;555 960 1.02;560 1020 .8;540 1080 .6;450 1150 .45;390 1110 .5;340 900 .6;310 780 .6;270 680 .45;230 620 .15;600 870 1.8;620 900 1.75;590 800 1.35;590 730 1.05;630 730 1.1;690 800 1.95;690 710 1.05;740 730 1.08;770 780 .98;740 830 1.3;690 870 1.7;640 800 1.6;660 950 1.5;700 980 1.4;600 980 1.3;620 1030 1.1;690 1045 1.02;750 990 1.05;755 900 1;740 1030 .9;620 1080 .6;700 1100 .5;790 900 .5;800 980 .7;820 1030 .8;880 1020 .75;850 1080 .45;560 1130 .1;700 1160 .08;850 1150 .06
570 300 .7;620 310 .7;570 240 .6;560 180 .5;660 300 .5;570 400 .7;530 330 .85;620 400 .55;690 430 .6;640 520 .5;710 590 .8;670 570 .6;620 620 .42;600 560 .7;590 480 .75;740 620 .6;700 520 .6;700 660 .65;760 680 .5;800 720 .4;830 760 .3;800 560 .3;760 500 .25;740 400 .2;700 300 .35;760 300 .15;870 440 .06;850 400 .08;880 700 .08;850 850 .12;870 900 .18;800 830 .35;935 930 .65;900 970 .55;940 860 .45;940 800 .3;930 720 .22;980 880 .3;980 980 .6;960 1060 .45;1010 780 .12;1010 640 .1;920 580 .28;880 280 .35;870 220 .22;930 300 .25;720 140 .22;650 130 .18;500 130 .3;500 70 .12;600 150 .35
1105 435 .92;1105 380 .5;1060 440 .65;990 430 .5;960 430 .4;1000 480 .38;1100 490 .65;1150 420 .6;1170 500 .4;1100 550 .45;1140 600 .55;1205 690 1.25;1180 650 .98;1240 720 1.05;1200 610 .72;1180 740 .95;1160 700 .85;1265 650 .5;1115 800 .85;1110 720 .7;1120 880 .8;1070 800 .45;1060 900 .45;1195 880 .52;1200 800 .62;1240 800 .75;1265 830 .85;1290 915 1.42;1255 890 .98;1330 900 1;1290 970 1.03;1295 860 .98;1350 820 .42;1350 740 .4;1390 700 .2;1410 780 .12;1375 880 .35;1240 950 .95;1160 1020 1.55;1120 960 1.08;1080 1020 1.08;1040 1040 .8;1200 970 1.1;1230 1010 1.15;1180 1080 1;1100 1060 1.03;1120 1110 .4;1190 1130 .35;1260 1060 .72;1290 1020 .72;1365 1055 1.42;1330 1040 .95;1365 1010 .9;1400 1060 .95;1365 1100 .85;1340 1130 .35;1440 1070 .2;1400 1140 .15;1430 980 .08;1420 900 .05;1060 1130 .1;1260 1130 .15;1470 1060 .03
1205 200 1.3;1200 150 1.1;1165 200 .9;1240 200 1;1210 260 1;1210 310 .45;1270 250 .4;1270 450 .33;1250 380 .33;1290 500 .22;1330 400 .06;1170 330 .12;1150 260 .3;1050 290 .06;960 260 .06;860 60 0
130 600 .1;200 560 .15;180 700 .12;210 930 .1;150 560 .15` },
];
const pts = [];
for (const s of sheets) {
  for (const row of s.samples.trim().split(/[;\n]/)) {
    const [x, y, v] = row.trim().split(' ').map(Number);
    pts.push([s.ox + x * s.sx - 20, s.oy + y * s.sy - 488, v]);
  }
}

// Non-negative kernel weights, so that the summed surface follows the samples.
const SIGMA = 18;
const kernel = (dx, dy) => Math.exp(-(dx * dx + dy * dy) / (2 * SIGMA * SIGMA));
const n = pts.length;
const K = pts.map(a => Float64Array.from(pts, b => kernel(a[0] - b[0], a[1] - b[1])));
const w = new Float64Array(n);
for (let pass = 0; pass < 200; pass++) {
  for (let i = 0; i < n; i++) {
    let sum = 0.05 * w[i];
    for (let j = 0; j < n; j++) sum += K[i][j] * w[j];
    w[i] = Math.max(0, w[i] + (pts[i][2] - sum) / 1.05);
  }
}

const canvas = document.getElementById('risk');
const W = canvas.width, H = canvas.height;
const field = new Float32Array(W * H);
const R = SIGMA * 4;
pts.forEach(([px, py], i) => {
  if (!w[i]) return;
  for (let y = Math.max(0, Math.floor(py - R)); y < Math.min(H, py + R); y++) {
    for (let x = Math.max(0, Math.floor(px - R)); x < Math.min(W, px + R); x++) {
      field[y * W + x] += w[i] * kernel(x - px, y - py);
    }
  }
});

const ramp = [[255, 255, 178], [254, 217, 118], [254, 178, 76], [253, 141, 60], [240, 59, 32], [189, 0, 38]];
const ctx = canvas.getContext('2d');
const img = ctx.createImageData(W, H);
for (let i = 0; i < W * H; i++) {
  const t = field[i] * 0.2;
  if (t < 0.001) continue;
  const u = Math.min(4.999, Math.max(0, t * 6 - 0.5));
  const k = Math.floor(u), f = u - k;
  for (let c = 0; c < 3; c++) img.data[i * 4 + c] = ramp[k][c] + (ramp[k + 1][c] - ramp[k][c]) * f;
  img.data[i * 4 + 3] = Math.min(1, t / 0.2) * 0.9 * 255;
}
ctx.putImageData(img, 0, 0);
```
